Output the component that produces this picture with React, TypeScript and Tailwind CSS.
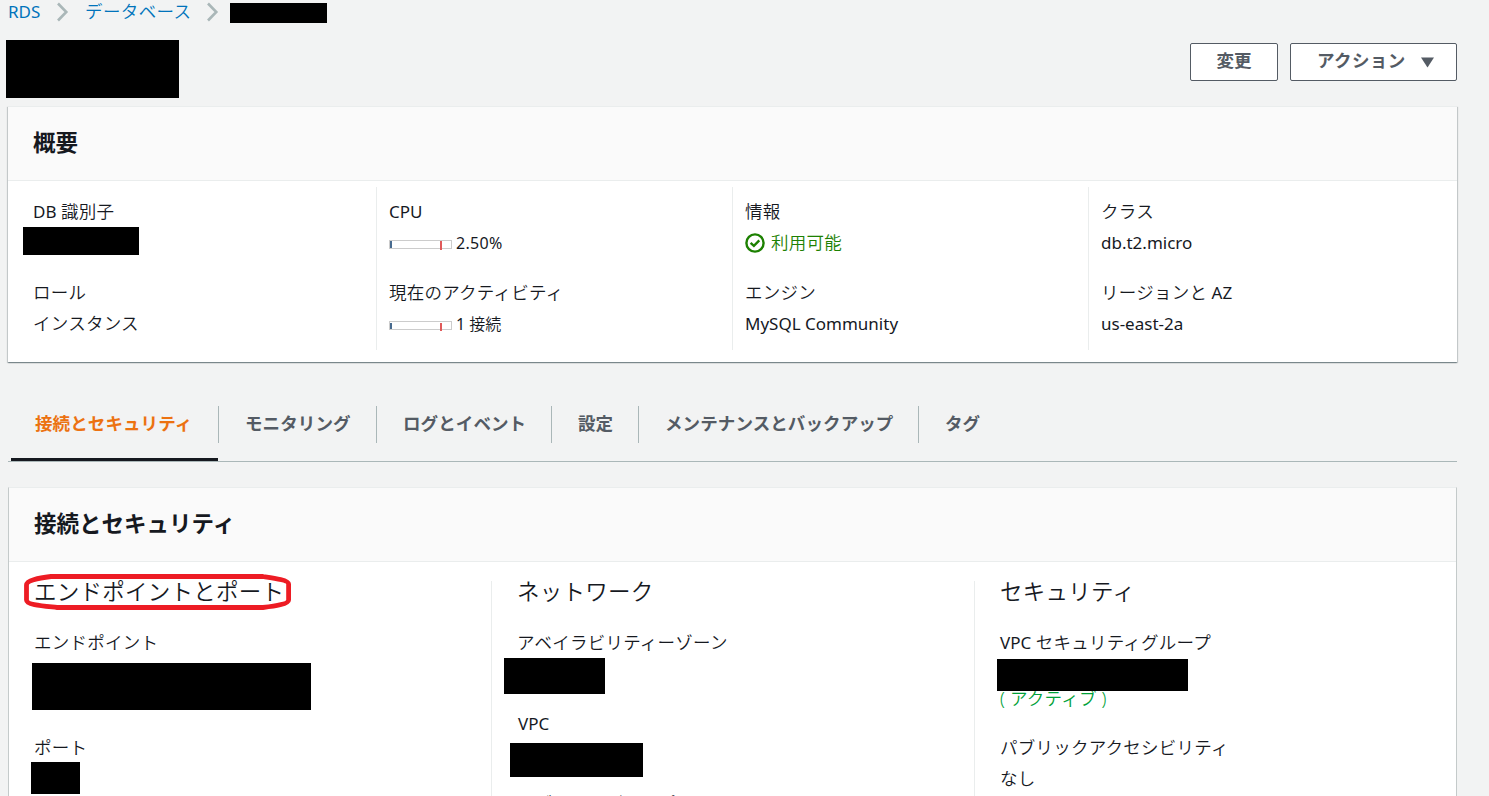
import type { ReactNode } from "react";

function Chevron() {
  return (
    <svg className="h-[20px] w-[13px] shrink-0" viewBox="0 0 13 20" fill="none" stroke="#aab7b8" strokeWidth="2.6">
      <path d="M2 1.5L10.3 10L2 18.5" />
    </svg>
  );
}

function Jp({ children }: { children: ReactNode }) {
  return <span className="font-[350] tracking-[0.25px]">{children}</span>;
}

function Label({ children }: { children: ReactNode }) {
  return <div className="h-[31px] leading-[31px] whitespace-nowrap">{children}</div>;
}

function Meter({ low }: { low?: boolean }) {
  return (
    <svg className="mt-[3px] h-[10px] w-[63px] shrink-0" viewBox="0 0 63 10">
      <rect x="0.5" y="0.5" width="62" height="8" fill="#fff" stroke="#ccc" />
      <rect x="1" y={low ? 2 : 1} width="2" height={low ? 6 : 7} fill="#486b8f" />
      <rect x="51" y={low ? 2 : 1} width="2" height={low ? 8 : 9} fill="#e05a5a" />
    </svg>
  );
}

function CheckIcon() {
  return (
    <svg className="h-[20px] w-[20px] shrink-0" viewBox="0 0 20 20" fill="none" stroke="#1d8102" strokeWidth="2.4">
      <circle cx="10" cy="10" r="8.6" />
      <path d="M5.6 9.8L8.9 12.8L14.3 7.4" />
    </svg>
  );
}

function Redacted({ className }: { className: string }) {
  return <div className={`relative bg-black ${className}`} />;
}

function SummaryColumn({ children, divided = true }: { children: ReactNode; divided?: boolean }) {
  return (
    <div className={`h-[163px] pt-[9px] pl-[12px] ${divided ? "border-l border-[#eaeded]" : ""}`}>{children}</div>
  );
}

const tabs = [
  { label: "モニタリング", width: "w-[158px]" },
  { label: "ログとイベント", width: "w-[175px]" },
  { label: "設定", width: "w-[87px]" },
  { label: "メンテナンスとバックアップ", width: "w-[280px]" },
];

export default function App() {
  return (
    <div className="h-[796px] w-[1489px] overflow-hidden bg-[#f2f3f3] font-['Noto_Sans','Noto_Sans_CJK_JP',sans-serif] text-[17.5px] text-[#16191f]">
      <nav className="flex h-[24px] items-center pl-[8px] leading-[24px] whitespace-nowrap text-[#0073bb]">
        <a className="w-[48px] text-[17px]">RDS</a>
        <Chevron />
        <a className="ml-[16px] w-[121px] pb-[2px] font-[350] tracking-[0.4px]">データベース</a>
        <Chevron />
        <Redacted className="ml-[11px] mt-[2px] h-[20px] w-[97px]" />
      </nav>

      <header className="flex h-[82px] pt-[16px] pl-[6px]">
        <Redacted className="h-[58px] w-[173px]" />
        <div className="mt-[3px] ml-[1011px] flex gap-[12px] font-bold text-[#545b64]">
          <button className="flex h-[38px] w-[88px] items-center justify-center rounded-[2px] border border-[#545b64] bg-white pb-[3px]">
            変更
          </button>
          <button className="flex h-[38px] w-[167px] items-center rounded-[2px] border border-[#545b64] bg-white pb-[3px] pl-[26px]">
            <span className="w-[104px] text-left tracking-[0.4px]">アクション</span>
            <svg className="mt-[3px] h-[11px] w-[13px]" viewBox="0 0 13 11">
              <path d="M0 0.5H13L6.5 10.5Z" fill="#545b64" />
            </svg>
          </button>
        </div>
      </header>

      <section className="ml-[8px] h-[256px] w-[1449px] bg-white shadow-[0_1px_1px_0_rgba(0,28,36,0.3),1px_1px_1px_0_rgba(0,28,36,0.15),-1px_1px_1px_0_rgba(0,28,36,0.15)]">
        <h2 className="h-[75px] border-t border-b border-[#eaeded] bg-[#fafafa] pl-[25px] text-[22.5px] leading-[71px] font-bold">
          概要
        </h2>
        <div className="grid grid-cols-[368px_356px_356px_1fr] pt-[6px]">
          <SummaryColumn divided={false}>
            <div className="pl-[13px]">
              <Label><span className="text-[17px]">DB </span><Jp>識別子</Jp></Label>
              <Redacted className="-ml-[10px] h-[28px] w-[116px]" />
              <div className="mt-[22px]">
                <Label><Jp>ロール</Jp></Label>
                <Label><Jp>インスタンス</Jp></Label>
              </div>
            </div>
          </SummaryColumn>
          <SummaryColumn>
            <Label><span className="text-[17px]">CPU</span></Label>
            <div className="flex h-[31px] items-center gap-[4px] pt-px text-[16px]">
              <Meter />
              <span className="tracking-[0.3px]">2.50%</span>
            </div>
            <div className="mt-[19px]">
              <Label><Jp>現在のアクティビティ</Jp></Label>
            </div>
            <div className="flex h-[31px] items-center gap-[4px] pt-px text-[16px]">
              <Meter low />
              <span>1 <span className="font-[350]">接続</span></span>
            </div>
          </SummaryColumn>
          <SummaryColumn>
            <Label><Jp>情報</Jp></Label>
            <div className="flex h-[31px] items-center gap-[6px] text-[#1d8102]">
              <CheckIcon />
              <Jp>利用可能</Jp>
            </div>
            <div className="mt-[19px]">
              <Label><Jp>エンジン</Jp></Label>
              <Label><span className="text-[17px]">MySQL Community</span></Label>
            </div>
          </SummaryColumn>
          <SummaryColumn>
            <Label><Jp>クラス</Jp></Label>
            <Label><span className="text-[17px]">db.t2.micro</span></Label>
            <div className="mt-[19px]">
              <Label><Jp>リージョンと</Jp><span className="text-[17px]"> AZ</span></Label>
              <Label><span className="text-[17px]">us-east-2a</span></Label>
            </div>
          </SummaryColumn>
        </div>
      </section>

      <div className="ml-[8px] flex h-[100px] w-[1449px] border-b border-[#aab7b8] pt-[44px] pl-[3px] font-bold whitespace-nowrap text-[#545b64]">
        <div className="h-[55px] w-[207px] border-b-[3px] border-[#16191f] pl-[24px] leading-[34px] tracking-[0.1px] text-[#ec7211]">
          接続とセキュリティ
        </div>
        {tabs.map((tab) => (
          <div key={tab.label} className={`h-[37px] border-l border-[#aab7b8] pl-[26px] leading-[34px] tracking-[0.1px] ${tab.width}`}>
            {tab.label}
          </div>
        ))}
        <div className="h-[37px] border-l border-[#aab7b8] pl-[26px] leading-[34px]">タグ</div>
      </div>

      <section className="mt-[25px] ml-[8px] h-[330px] w-[1449px] border-x border-t border-x-[#c4caca] border-t-[#eaeded] bg-white">
        <h2 className="h-[74px] border-b border-[#eaeded] bg-[#fafafa] pl-[25px] text-[22.5px] leading-[71px] font-bold">
          接続とセキュリティ
        </h2>
        <div className="grid grid-cols-[482px_483px_1fr] pt-[19px] whitespace-nowrap">
          <div className="relative h-[240px] pl-[25px]">
            <h3 className="h-[46px] text-[22.5px] leading-[22px]"><Jp>エンドポイントとポート</Jp></h3>
            <Label><Jp>エンドポイント</Jp></Label>
            <Redacted className="mt-[5px] -ml-[2px] h-[47px] w-[279px]" />
            <div className="mt-[22px]"><Label><Jp>ポート</Jp></Label></div>
            <Redacted className="-mt-[1px] -ml-[3px] h-[32px] w-[49px]" />
            <svg className="absolute -top-[8px] left-[14px] h-[38px] w-[270px]" viewBox="0 0 270 38" fill="none" stroke="#ed1c24" strokeWidth="4.8">
              <path d="M28 3.500H240C250 5 265.600 7 265.600 11V27C265.600 31 252 33 240 34.500H34C20 33 3.500 32 3.500 27V12C3.500 7 16 5 28 3.500Z" />
            </svg>
          </div>
          <div className="h-[240px] border-l border-[#eaeded] pl-[25px]">
            <h3 className="h-[46px] text-[22.5px] leading-[22px]"><Jp>ネットワーク</Jp></h3>
            <Label><Jp>アベイラビリティーゾーン</Jp></Label>
            <Redacted className="-ml-[13px] h-[36px] w-[101px]" />
            <div className="mt-[14px] pl-px"><Label><span className="text-[17px]">VPC</span></Label></div>
            <Redacted className="mt-[4px] -ml-[7px] h-[34px] w-[133px]" />
            <div className="mt-[11px]"><Label><Jp>サブネットグループ</Jp></Label></div>
          </div>
          <div className="h-[240px] border-l border-[#eaeded] pl-[25px]">
            <h3 className="h-[46px] text-[22.5px] leading-[22px]"><Jp>セキュリティ</Jp></h3>
            <Label><span className="text-[17px]">VPC </span><Jp>セキュリティグループ</Jp></Label>
            <Redacted className="z-10 mt-[1px] -ml-[3px] h-[32px] w-[191px]" />
            <div className="-mt-[8px] text-[#00a138]"><Label><Jp>( アクティブ )</Jp></Label></div>
            <div className="mt-[18px]">
              <Label><Jp>パブリックアクセシビリティ</Jp></Label>
              <Label><Jp>なし</Jp></Label>
            </div>
          </div>
        </div>
      </section>
    </div>
  );
}
